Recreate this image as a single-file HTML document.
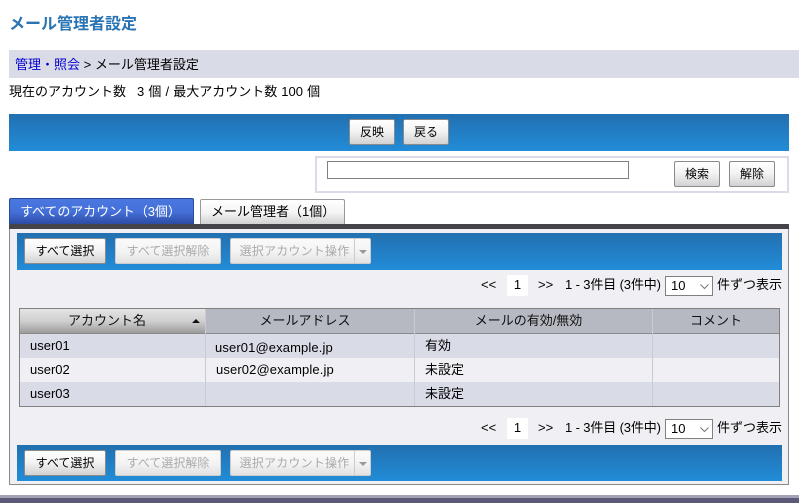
<!DOCTYPE html>
<html lang="ja">
<head>
<meta charset="utf-8">
<title>メール管理者設定</title>
<style>
html,body{margin:0;padding:0;background:#fff;}
body{width:799px;height:503px;position:relative;overflow:hidden;font-family:"Liberation Sans","Noto Sans CJK JP",sans-serif;font-size:13px;color:#000;}
.a{position:absolute;box-sizing:border-box;}
.t{position:absolute;white-space:nowrap;line-height:16px;}
.bar{position:absolute;background:linear-gradient(#2270b0,#228cd8);}
.b{position:absolute;box-sizing:border-box;height:26px;border:1px solid #8a8a8a;border-radius:2px;background:linear-gradient(#fff,#f4f4f4 45%,#d2d2d2);text-align:center;line-height:24px;color:#000;white-space:nowrap;font-size:12px;}
.d{border-color:#ccc;background:linear-gradient(#fafafa,#f4f4f4 50%,#e2e2e2);color:#aaa;}
.th{position:absolute;top:309px;height:24px;background:#b6b9c2;text-align:center;line-height:23px;color:#111;box-sizing:border-box;}
.row{position:absolute;left:20px;width:759px;height:24px;}
.v{position:absolute;width:1px;background:#c9cbd2;}
.sel{position:absolute;box-sizing:border-box;left:665px;width:48px;height:20px;border:1px solid #808080;background:#fff;line-height:18px;padding-left:5px;}
.p{letter-spacing:-0.13px;}
.op{padding-left:4px;letter-spacing:0.2px;}
</style>
</head>
<body>
<div class="t" style="left:9px;top:16px;font-size:16px;font-weight:bold;color:#2a74b4;line-height:18px;">メール管理者設定</div>

<div class="a" style="left:9px;top:50px;width:790px;height:28px;background:#d9dbe7;"></div>
<div class="t" style="left:15px;top:57px;"><span style="color:#0000d0;">管理・照会</span> &gt; メール管理者設定</div>
<div class="t" style="left:9px;top:84px;word-spacing:0.5px;">現在のアカウント数<span style="display:inline-block;width:11px;"></span>3 個 / 最大アカウント数 100 個</div>

<div class="bar" style="left:9px;top:114px;width:780px;height:37px;"></div>
<div class="b" style="left:349px;top:119px;width:46px;">反映</div>
<div class="b" style="left:403px;top:119px;width:46px;">戻る</div>

<div class="a" style="left:315px;top:156px;width:474px;height:37px;border:2px solid #d9dbe7;background:#fff;"></div>
<div class="a" style="left:327px;top:161px;width:302px;height:18px;border:1px solid #808080;background:#fff;"></div>
<div class="b" style="left:674px;top:161px;width:46px;">検索</div>
<div class="b" style="left:729px;top:161px;width:46px;">解除</div>

<div class="a" style="left:9px;top:198px;width:185px;height:27px;background:linear-gradient(#4a78e0,#4470d8 50%,#2a48a0);border:1px solid #2a4a9a;border-bottom:0;border-radius:2px 2px 0 0;color:#fff;line-height:25px;padding-left:10px;white-space:nowrap;letter-spacing:-0.08px;">すべてのアカウント（3個）</div>
<div class="a" style="left:200px;top:199px;width:145px;height:26px;background:linear-gradient(#fff,#f4f4f4 50%,#cfcfcf);border:1px solid #999;border-bottom:0;border-radius:2px 2px 0 0;line-height:24px;padding-left:10px;white-space:nowrap;">メール管理者（1個）</div>
<div class="a" style="left:9px;top:224px;width:780px;height:5px;background:#444448;"></div>

<div class="a" style="left:9px;top:229px;width:780px;height:256px;background:#efeff4;border:1px solid #8a8a8a;border-top:0;"></div>

<div class="bar" style="left:17px;top:233px;width:765px;height:37px;"></div>
<div class="b" style="left:24px;top:238px;width:82px;">すべて選択</div>
<div class="b d" style="left:115px;top:238px;width:106px;">すべて選択解除</div>
<div class="b d op" style="left:230px;top:238px;width:125px;border-radius:2px 0 0 2px;">選択アカウント操作</div>
<div class="b d" style="left:354px;top:238px;width:17px;border-radius:0 2px 2px 0;"></div>
<div class="a" style="left:359px;top:250px;width:0;height:0;border-left:4px solid transparent;border-right:4px solid transparent;border-top:4px solid #999;"></div>

<div class="t" style="left:481px;top:277px;">&lt;&lt;</div>
<div class="a" style="left:507px;top:275px;width:21px;height:21px;background:#fff;text-align:center;line-height:20px;">1</div>
<div class="t" style="left:538px;top:277px;">&gt;&gt;</div>
<div class="t p" style="left:565px;top:277px;">1 - 3件目 (3件中)</div>
<div class="sel" style="top:276px;">10</div>
<svg class="a" style="left:700px;top:284px;" width="9" height="6" viewBox="0 0 9 6"><path d="M0.5 0.5L4.5 4.5L8.5 0.5" fill="none" stroke="#777" stroke-width="1"/></svg>
<div class="t" style="left:717px;top:277px;">件ずつ表示</div>

<div class="a" style="left:19px;top:308px;width:761px;height:99px;border:1px solid #808080;background:#d9dbe7;"></div>
<div class="th" style="left:20px;width:185px;background:linear-gradient(#e4e4e4,#d0d0d0 50%,#9c9c9c);"><span style="position:absolute;left:48px;top:0;">アカウント名</span></div>
<div class="a" style="left:192px;top:319px;width:0;height:0;border-left:4px solid transparent;border-right:4px solid transparent;border-bottom:4px solid #111;"></div>
<div class="th" style="left:206px;width:208px;padding-right:10px;">メールアドレス</div>
<div class="th" style="left:415px;width:237px;padding-right:10px;">メールの有効/無効</div>
<div class="th" style="left:653px;width:126px;">コメント</div>
<div class="a" style="left:20px;top:333px;width:759px;height:1px;background:#8a8a8a;"></div>

<div class="row" style="top:334px;background:#d9dbe7;"></div>
<div class="row" style="top:358px;background:#efeff4;"></div>
<div class="row" style="top:382px;background:#d9dbe7;"></div>
<div class="v" style="left:205px;top:309px;height:97px;"></div>
<div class="v" style="left:414px;top:309px;height:97px;"></div>
<div class="v" style="left:652px;top:309px;height:97px;"></div>

<div class="t" style="left:30px;top:338px;">user01</div>
<div class="t" style="left:215px;top:340px;letter-spacing:0.12px;">user01@example.jp</div>
<div class="t" style="left:425px;top:338px;">有効</div>
<div class="t" style="left:30px;top:362px;">user02</div>
<div class="t" style="left:216px;top:362px;letter-spacing:0.12px;">user02@example.jp</div>
<div class="t" style="left:425px;top:362px;">未設定</div>
<div class="t" style="left:30px;top:386px;">user03</div>
<div class="t" style="left:425px;top:386px;">未設定</div>

<div class="t" style="left:481px;top:420px;">&lt;&lt;</div>
<div class="a" style="left:507px;top:418px;width:21px;height:21px;background:#fff;text-align:center;line-height:20px;">1</div>
<div class="t" style="left:538px;top:420px;">&gt;&gt;</div>
<div class="t p" style="left:565px;top:420px;">1 - 3件目 (3件中)</div>
<div class="sel" style="top:419px;">10</div>
<svg class="a" style="left:700px;top:427px;" width="9" height="6" viewBox="0 0 9 6"><path d="M0.5 0.5L4.5 4.5L8.5 0.5" fill="none" stroke="#777" stroke-width="1"/></svg>
<div class="t" style="left:717px;top:420px;">件ずつ表示</div>

<div class="bar" style="left:17px;top:445px;width:765px;height:36px;"></div>
<div class="b" style="left:24px;top:450px;width:82px;">すべて選択</div>
<div class="b d" style="left:115px;top:450px;width:106px;">すべて選択解除</div>
<div class="b d op" style="left:230px;top:450px;width:125px;border-radius:2px 0 0 2px;">選択アカウント操作</div>
<div class="b d" style="left:354px;top:450px;width:17px;border-radius:0 2px 2px 0;"></div>
<div class="a" style="left:359px;top:462px;width:0;height:0;border-left:4px solid transparent;border-right:4px solid transparent;border-top:4px solid #999;"></div>

<div class="a" style="left:0;top:495px;width:799px;height:3px;background:#a3a3b5;"></div>
<div class="a" style="left:0;top:498px;width:799px;height:5px;background:#5a5a78;"></div>
</body>
</html>
